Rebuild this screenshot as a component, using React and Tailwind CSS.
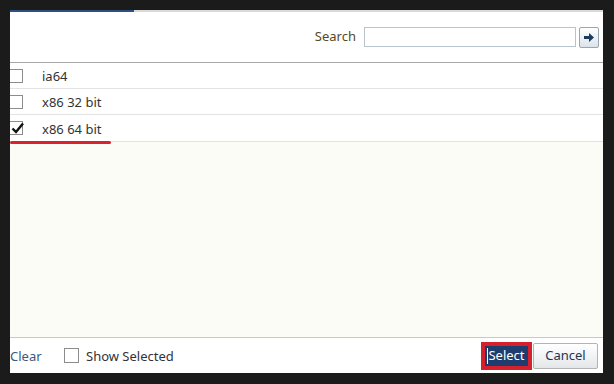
import { useState } from 'react'

const ITEMS = [
  { label: 'ia64', h: 'h-[26px]' },
  { label: 'x86 32 bit', h: 'h-[26px]' },
  { label: 'x86 64 bit', h: 'h-[27px]' },
]

function Box({ checked }) {
  return (
    <span className="relative w-[14px] h-[14px] shrink-0 border border-[#8c8c8c] bg-white flex items-center justify-center">
      {checked && (
        <svg width="14" height="12" viewBox="0 0 14 12" className="absolute left-[1px] top-[0px]">
          <path d="M1.5 6.5 L5 10 L12 1.5" fill="none" stroke="#111" strokeWidth="2.4" />
        </svg>
      )}
    </span>
  )
}

export default function App() {
  const [checked, setChecked] = useState({ 'x86 64 bit': true })

  return (
    <div
      className="w-[614px] h-[384px] bg-[#1b1b1b] pl-[10px] pt-[10px] pr-[11px] pb-[11px]"
      style={{ fontFamily: '"Noto Sans", "Liberation Sans", sans-serif' }}
    >
      <div className="w-full h-full bg-white flex flex-col overflow-hidden">

        {/* top accent line */}
        <div className="flex h-[2px] shrink-0">
          <div className="w-[124px] bg-[#2d4f83]" />
          <div className="flex-1 bg-[#d9d9d9]" />
        </div>

        {/* search bar */}
        <div className="h-[51px] shrink-0 flex items-center justify-end pr-[4px] border-b border-[#a8a8a8]">
          <span className="text-[13px] text-[#54492a] mr-[8px] mb-[1px]">Search</span>
          <div className="w-[212px] h-[20px] border border-[#b9c3cb] bg-white" />
          <button className="ml-[3px] w-[20px] h-[21px] border border-[#98a6b4] rounded-[2px] bg-gradient-to-b from-white to-[#dbe3ea] flex items-center justify-center">
            <svg width="12" height="11" viewBox="0 0 12 11">
              <path d="M1 4 H6 V1 L11 5.5 L6 10 V7 H1 Z" fill="#1b3a5c" />
            </svg>
          </button>
        </div>

        {/* list */}
        {ITEMS.map((it) => (
          <div
            key={it.label}
            className={`relative ${it.h} shrink-0 flex items-center border-b border-[#e3e3e3] cursor-pointer`}
            onClick={() => setChecked((c) => ({ ...c, [it.label]: !c[it.label] }))}
          >
            <span className="ml-[-1px]">
              <Box checked={!!checked[it.label]} />
            </span>
            <span className="ml-[19px] pt-[3px] text-[13px] text-[#333]">{it.label}</span>
            {it.label === 'x86 64 bit' && (
              <div className="absolute left-0 bottom-[-3px] w-[101px] h-[3px] rounded-full bg-[#d9222d]" />
            )}
          </div>
        ))}

        <div className="flex-1 bg-[#fcfcf6] border-b border-[#c9c9c9]" />

        {/* footer */}
        <div className="h-[35px] shrink-0 flex items-center pr-[5px]">
          <span className="w-[54px] pt-[3px] text-[13px] text-[#3b5a80]">Clear</span>
          <span className="w-[15px] h-[15px] border border-[#8c8c8c] bg-white shrink-0" />
          <span className="ml-[7px] pt-[3px] text-[13px] text-[#333]">Show Selected</span>

          <div className="ml-auto flex items-center">
            <div className="w-[51px] h-[28px] border-[3px] border-[#d4212d] p-[1px] bg-[#d4212d]">
              <div className="relative w-full h-full bg-[#1e3d6e] flex items-center justify-center pt-[1px] text-[13px] text-white">
                <span className="absolute left-[2px] top-[2px] w-[1px] h-[16px] bg-white" />
                Select
              </div>
            </div>
            <button className="ml-[1px] w-[65px] h-[26px] border border-[#b3b3b3] rounded-[2px] bg-gradient-to-b from-white to-[#e4e7ea] pt-[1px] text-[13px] text-[#1d3656]">
              Cancel
            </button>
          </div>
        </div>

      </div>
    </div>
  )
}
